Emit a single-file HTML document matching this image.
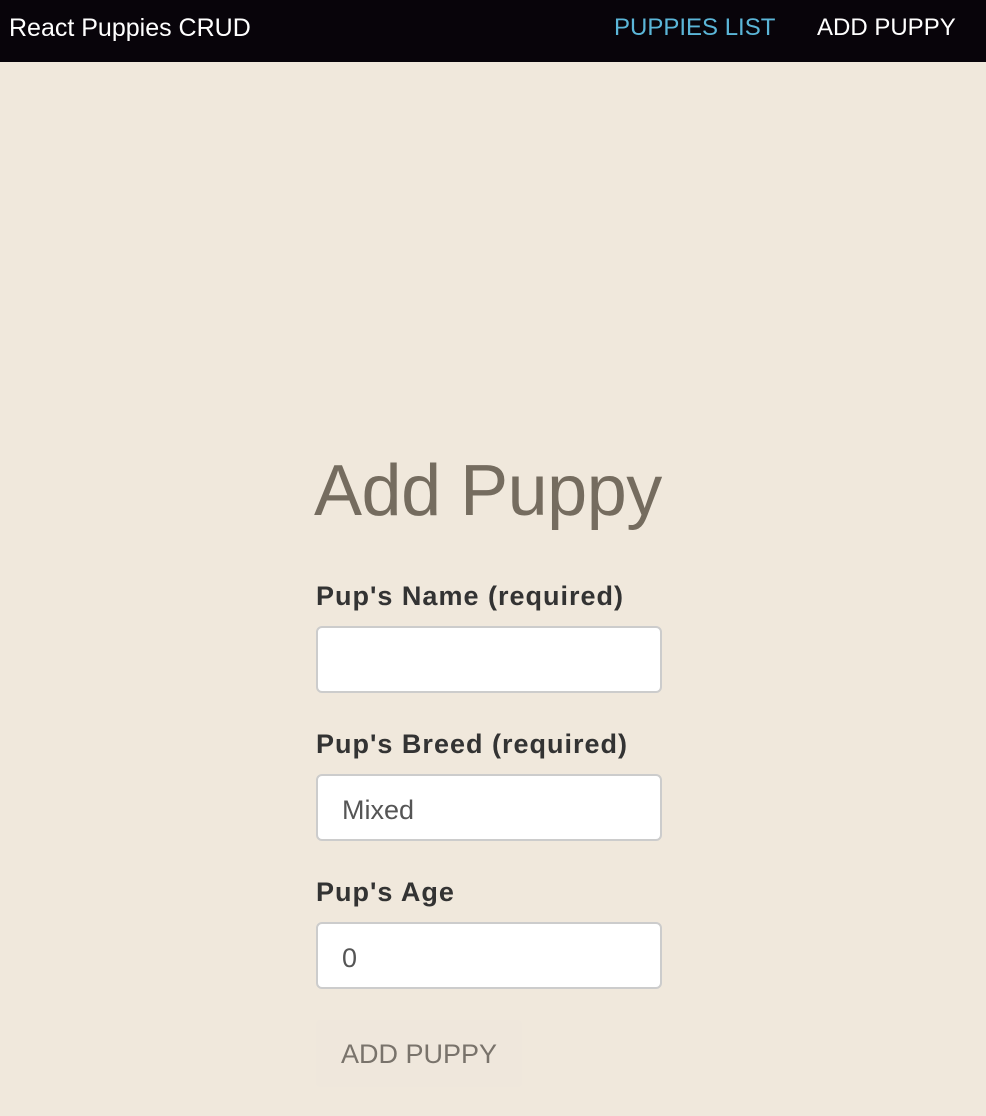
<!DOCTYPE html>
<html><head><style>
*{margin:0;padding:0;box-sizing:border-box}
body{width:986px;height:1116px;background:#f0e8dc;font-family:"Liberation Sans",sans-serif;position:relative;overflow:hidden}
.nav{position:absolute;left:0;top:0;width:986px;height:62px;background:#08040a}
.nav span{position:absolute;top:14px;font-size:24px;color:#fff;white-space:nowrap}
h1{position:absolute;left:314px;top:450px;font-size:72px;font-weight:normal;color:#756c5f;letter-spacing:-0.5px}
label{position:absolute;left:316px;font-size:27px;font-weight:bold;color:#333;white-space:nowrap;letter-spacing:1px}
.in{position:absolute;left:316px;width:346px;height:67px;background:#fff;border:2px solid #ccc;border-radius:6px;font-size:27px;color:#555;padding:19px 0 0 24px}
.btn{position:absolute;left:316px;top:1020px;width:206px;height:67px;background:#efe7dc;border-radius:4px;font-size:27px;color:#79736b;padding:19px 0 0 25px;white-space:nowrap}
</style></head><body>
<div class="nav">
<span style="left:9px;font-size:25px">React Puppies CRUD</span>
<span style="left:614px;color:#5bb6d8">PUPPIES LIST</span>
<span style="left:817px">ADD PUPPY</span>
</div>
<h1>Add Puppy</h1>
<label style="top:581px">Pup's Name (required)</label>
<div class="in" style="top:626px"></div>
<label style="top:729px">Pup's Breed (required)</label>
<div class="in" style="top:774px">Mixed</div>
<label style="top:877px">Pup's Age</label>
<div class="in" style="top:922px">0</div>
<div class="btn">ADD PUPPY</div>
</body></html>
